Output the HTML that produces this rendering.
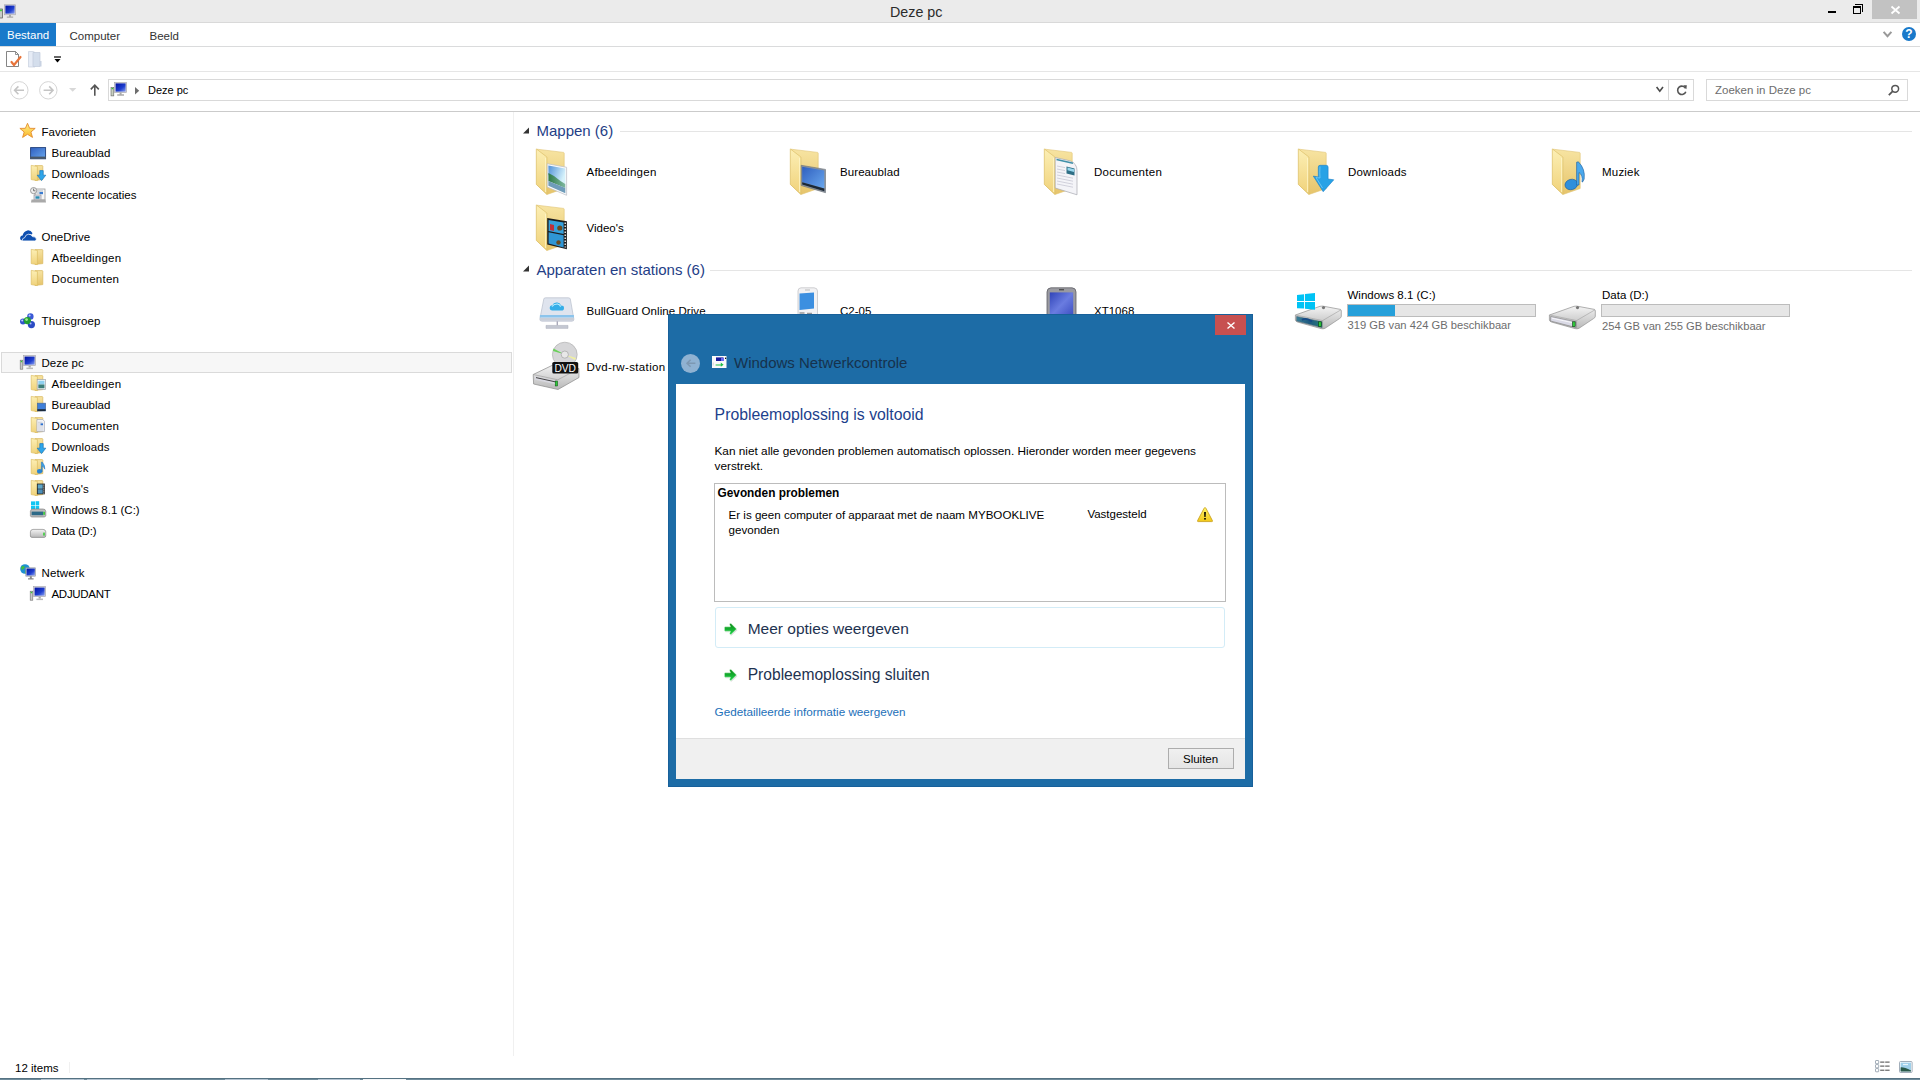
<!DOCTYPE html>
<html><head><meta charset="utf-8">
<style>
*{margin:0;padding:0;box-sizing:border-box}
html,body{width:1920px;height:1080px;overflow:hidden;background:#fff}
body{position:relative;font-family:"Liberation Sans",sans-serif;color:#000;font-size:11.5px}
.a{position:absolute}
.t{position:absolute;white-space:nowrap;line-height:15px;font-size:11.5px}
.ln{position:absolute;background:#dcdcdc}
svg.i{position:absolute;overflow:visible}
</style></head><body>

<svg width="0" height="0" style="position:absolute">
<defs>
<linearGradient id="gFront" x1="0" y1="0" x2="0" y2="1"><stop offset="0" stop-color="#fcefb5"/><stop offset="1" stop-color="#f0d27a"/></linearGradient>
<linearGradient id="gBack" x1="0" y1="0" x2="0" y2="1"><stop offset="0" stop-color="#f7e4a2"/><stop offset="1" stop-color="#e6c46a"/></linearGradient>
<linearGradient id="gStar" x1="0" y1="0" x2="0" y2="1"><stop offset="0" stop-color="#fff08a"/><stop offset="1" stop-color="#f9b82a"/></linearGradient>
<linearGradient id="gScr" x1="0" y1="0" x2="1" y2="1"><stop offset="0" stop-color="#2f5fbf"/><stop offset="1" stop-color="#6aa8ee"/></linearGradient>
<linearGradient id="gMon" x1="0" y1="0" x2="1" y2="1"><stop offset="0" stop-color="#0010a0"/><stop offset="0.6" stop-color="#2040d0"/><stop offset="1" stop-color="#8aa0f0"/></linearGradient>
<linearGradient id="gDrv" x1="0" y1="0" x2="0" y2="1"><stop offset="0" stop-color="#f4f4f4"/><stop offset="1" stop-color="#b8b8b8"/></linearGradient>
<linearGradient id="gGreen" x1="0" y1="0" x2="0" y2="1"><stop offset="0" stop-color="#0a8a16"/><stop offset="1" stop-color="#1fd24a"/></linearGradient>
<linearGradient id="gWarn" x1="0" y1="0" x2="0" y2="1"><stop offset="0" stop-color="#fff46a"/><stop offset="1" stop-color="#f2c818"/></linearGradient>
<linearGradient id="gBtn" x1="0" y1="0" x2="0" y2="1"><stop offset="0" stop-color="#f2f2f2"/><stop offset="1" stop-color="#e2e2e2"/></linearGradient>

<!-- small folder 16 -->
<symbol id="f16" viewBox="0 0 16 16" overflow="visible">
 <path d="M5 0.6L12.4 0.6L12.8 1.2V14.6L5 15.4z" fill="url(#gBack)" stroke="#d8b65c" stroke-width="0.7"/>
 <path d="M1.2 0.4L7.4 1.4V15.6L1.2 14.6z" fill="url(#gFront)" stroke="#dcbd62" stroke-width="0.7"/>
</symbol>
<symbol id="o16pic" viewBox="0 0 16 16" overflow="visible">
 <rect x="7.2" y="4.6" width="8.4" height="9.8" fill="#fafafa" stroke="#a0a4ac" stroke-width="0.7"/>
 <rect x="8.3" y="5.7" width="6.2" height="3.8" fill="#8fd0f0"/><rect x="8.3" y="9.5" width="6.2" height="3.8" fill="#3d7f7a"/>
</symbol>
<symbol id="o16desk" viewBox="0 0 16 16" overflow="visible">
 <rect x="7.4" y="7.2" width="8.2" height="7.8" fill="#3f7fd9" stroke="#4a6a9a" stroke-width="0.7"/>
 <rect x="7.4" y="13.2" width="8.2" height="1.8" fill="#1c2a3a"/>
</symbol>
<symbol id="o16doc" viewBox="0 0 16 16" overflow="visible">
 <path d="M6.9 2.6H12.8L14.4 4.2V14.6H6.9z" fill="#f8f8fa" stroke="#a0a4b0" stroke-width="0.7"/>
 <path d="M8 5.2h4.6M8 7h5.4M8 9h5.4M8 11h5.4M8 13h5.4" stroke="#b0b6c4" stroke-width="0.7"/>
 <rect x="10.6" y="6.4" width="2.4" height="1.8" fill="#2a6fd0"/>
</symbol>
<symbol id="o16dl" viewBox="0 0 16 16" overflow="visible">
 <path d="M9.8 5.6H13.2V10.2H15.8L11.5 15.6L7.2 10.2H9.8z" fill="#2ea6ea" stroke="#1b78c0" stroke-width="0.7"/>
</symbol>
<symbol id="o16mus" viewBox="0 0 16 16" overflow="visible">
 <ellipse cx="9.6" cy="12.3" rx="2.6" ry="2.3" fill="#2a86d6"/>
 <path d="M11.4 3L12.4 3.2Q15.2 6.5 14.8 10.2Q13.8 7.6 12.2 7V12.4H11.4z" fill="#3aa0e6" stroke="#1f6fb8" stroke-width="0.5"/>
</symbol>
<symbol id="o16vid" viewBox="0 0 16 16" overflow="visible">
 <rect x="6.9" y="3.6" width="8" height="10.7" fill="#222"/>
 <rect x="7.7" y="4.4" width="5" height="4.3" fill="#5fa6c8"/><rect x="7.7" y="9.3" width="5" height="4.3" fill="#4d8fb8"/>
 <path d="M13.8 4.6v1M13.8 6.6v1M13.8 8.6v1M13.8 10.6v1M13.8 12.6v1" stroke="#fff" stroke-width="0.9"/>
</symbol>
<!-- star -->
<symbol id="star" viewBox="0 0 16 16" overflow="visible">
 <path d="M7.5 0.3L9.6 5.3L15.2 5.4L10.9 9L12.5 14.4L7.5 11.3L2.6 14.4L4.2 9L-0.1 5.4L5.4 5.3z" fill="url(#gStar)" stroke="#e38b2c" stroke-width="0.9" stroke-linejoin="round"/>
</symbol>
<symbol id="mon16" viewBox="0 0 16 16" overflow="visible">
 <rect x="0.6" y="1.6" width="15" height="11.2" fill="url(#gScr)" stroke="#1f3e7a" stroke-width="0.9"/>
 <rect x="0.2" y="10.6" width="15.8" height="2.2" fill="#4a5866"/>
</symbol>
<symbol id="recent16" viewBox="0 0 16 16" overflow="visible">
 <rect x="5" y="2" width="10" height="11" fill="#f6f6f6" stroke="#9a9a9a" stroke-width="0.8"/>
 <path d="M6.5 4h6.5M6.5 6h6.5" stroke="#9ab" stroke-width="0.8"/><rect x="9.5" y="5" width="3.5" height="2.2" fill="#3a7bd0"/>
 <rect x="4" y="8" width="7" height="5" fill="#dde" stroke="#888" stroke-width="0.6"/><rect x="5.5" y="9.3" width="4" height="2.4" fill="#2a8fb0"/>
 <path d="M1.5 12.5H15.5L16 15.5H1z" fill="#a9a9a9"/>
 <circle cx="3.6" cy="3.6" r="3.1" fill="#eee" stroke="#888" stroke-width="0.8"/><path d="M3.6 1.6V3.8H5.4" stroke="#555" stroke-width="0.8" fill="none"/>
</symbol>
<symbol id="cloud16" viewBox="0 0 16 16" overflow="visible">
 <path d="M0.1 10.6Q-0.1 7.8 2.6 7.4Q3.4 3.4 7.4 2.4Q10.8 2 12.4 5L12 6.4Q9.4 5.6 7.8 7Q5.2 7.6 4.6 9.8Q2.6 10 2.4 12.6Q0.3 12.4 0.1 10.6z" fill="#0f50b0"/>
 <path d="M2.2 12.9Q2 10 4.8 9.6Q5.4 6.4 8.6 6.2Q11.4 6.2 12.4 8.6Q16.3 8.4 16.3 11.2Q16.3 12.9 14.6 12.9z" fill="#0f50b0" stroke="#fff" stroke-width="0.7"/>
</symbol>
<symbol id="home16" viewBox="0 0 16 16" overflow="visible">
 <circle cx="10.4" cy="3.4" r="3.2" fill="#3b5ad6"/><circle cx="3" cy="8.4" r="3" fill="#3354cc"/><circle cx="11.4" cy="11.6" r="3.6" fill="#2c4cc4"/>
 <circle cx="7.4" cy="7.6" r="3.6" fill="#22a032"/><circle cx="6.6" cy="6.6" r="1.4" fill="#9ee890"/>
 <circle cx="9.6" cy="2.4" r="1" fill="#c0d0ff"/><circle cx="2.2" cy="7.4" r="1" fill="#c0d0ff"/><circle cx="10.6" cy="10.6" r="1" fill="#a8b8f8"/>
</symbol>
<symbol id="pc16" viewBox="0 0 16 16" overflow="visible">
 <rect x="0.2" y="5.2" width="2.6" height="9" fill="#c8c8c8" stroke="#707070" stroke-width="0.6"/><rect x="0.8" y="5.8" width="1.4" height="1.4" fill="#3c3"/>
 <rect x="3.6" y="0.6" width="12" height="10" fill="#d9d9e0" stroke="#a0a0a8" stroke-width="0.6"/>
 <rect x="4.6" y="1.6" width="10" height="8" fill="url(#gMon)"/>
 <path d="M8.6 10.6h2.2v2h-2.2z" fill="#aaa"/><path d="M6.4 12.6h6.6v1.5H6.4z" fill="#bbb"/>
</symbol>
<symbol id="drvc16" viewBox="0 0 16 16" overflow="visible">
 <rect x="1" y="0.4" width="4" height="3.6" fill="#10c6f4"/><rect x="5.6" y="0.2" width="3.6" height="3.8" fill="#10c6f4"/>
 <rect x="1" y="4.6" width="4" height="3.4" fill="#10c6f4"/><rect x="5.6" y="4.6" width="3.6" height="3.4" fill="#10c6f4"/>
 <path d="M0.4 10.4Q0.6 8 3 8H13Q15.6 8 15.8 10.4V14.6Q15.6 16 14 16H2Q0.4 16 0.4 14.6z" fill="#bdbdbd" stroke="#777" stroke-width="0.6"/>
 <rect x="1.6" y="10.6" width="11.6" height="3.6" fill="#2e6a88"/><rect x="13.4" y="10.8" width="1.4" height="3" fill="#2c2"/>
</symbol>
<symbol id="drvd16" viewBox="0 0 16 16" overflow="visible">
 <path d="M0.4 10.4Q0.6 8 3 8H13Q15.6 8 15.8 10.4V14.6Q15.6 16 14 16H2Q0.4 16 0.4 14.6z" fill="url(#gDrv)" stroke="#777" stroke-width="0.6" transform="translate(0,-2.6)"/>
 <rect x="13.3" y="8.6" width="1.4" height="3" fill="#2c2"/>
</symbol>
<symbol id="net16" viewBox="0 0 16 16" overflow="visible">
 <circle cx="5" cy="5" r="4.8" fill="#1f8fd0"/><path d="M1.2 3Q3 1 5 3Q4 5 2 6Q1 5 1.2 3zM5.5 6.5Q7.5 6 8.6 8Q7 9.6 5 9.4Q4.6 8 5.5 6.5z" fill="#3fbf3f"/>
 <rect x="5.8" y="3.8" width="9.8" height="8.4" fill="#c0c6d0" stroke="#8a8f98" stroke-width="0.5"/><rect x="6.6" y="4.6" width="8.2" height="6.8" fill="url(#gMon)"/>
 <path d="M9.8 12.2h2v2h-2zM8 14.2h5.6v1.2H8z" fill="#888"/>
</symbol>

<!-- large folder 48 -->
<symbol id="f48" viewBox="0 0 48 48" overflow="visible">
 <path d="M5 1.2L31.6 4.4Q32.2 4.6 32.2 5.4V40.5L15 46.5L5 37z" fill="url(#gBack)" stroke="#e0c370" stroke-width="0.6"/>
 <path d="M4.3 0.9L14.9 9V46.3L4.3 36.4z" fill="url(#gFront)" stroke="#dcc06a" stroke-width="0.7"/>
 <path d="M13.6 10V44" stroke="#fff6cc" stroke-width="0.8"/>
</symbol>
<symbol id="o48pic" viewBox="0 0 48 48" overflow="visible">
 <linearGradient id="gSky" x1="0" y1="0" x2="1" y2="0.4"><stop offset="0" stop-color="#4f90d8"/><stop offset="1" stop-color="#d6f2fb"/></linearGradient>
 <linearGradient id="gHill" x1="0" y1="0" x2="1" y2="0"><stop offset="0" stop-color="#2f7a48"/><stop offset="1" stop-color="#7fb8a0"/></linearGradient>
 <path d="M15.2 15.7L34.6 19.3V47.3L15.2 39z" fill="#fbfbfb" stroke="#b9bcc4" stroke-width="0.7"/>
 <path d="M16.4 17.4L33.3 20.6V36L16.4 27z" fill="url(#gSky)"/>
 <path d="M16.4 25L22 28Q28 33 33.3 36V40L16.4 33z" fill="url(#gHill)"/>
 <path d="M16.4 33L33.3 40V45.2L16.4 37.8z" fill="#6f9cba"/>
</symbol>
<symbol id="o48desk" viewBox="0 0 48 48" overflow="visible">
 <path d="M15.2 17.3L39.5 21.4V44.7L15.2 37.5z" fill="#8a929c" stroke="#6a7078" stroke-width="0.6"/>
 <path d="M16.2 18.7L38.3 22.6V40.6L16.2 34.2z" fill="url(#gScr)"/>
 <path d="M16.2 34.2L38.3 40.6V43.2L16.2 36.6z" fill="#1b2836"/>
</symbol>
<symbol id="o48doc" viewBox="0 0 48 48" overflow="visible">
 <path d="M15.2 9.5L30 12.8Q37 15.5 37 22.5V46.8L15.2 40z" fill="#f4f4f8" stroke="#a6a8b0" stroke-width="0.7"/>
 <path d="M16.5 11.5L33 15.2" stroke="#3f8fa8" stroke-width="1.6"/>
 <path d="M17 18l8 1.6M17 21l8 1.6M17 24l8 1.6M17 27l16 3.2M17 30l16 3.2M17 33l16 3.2M17 36l16 3.2" stroke="#c8c8d4" stroke-width="0.8"/>
 <path d="M26.5 18.5L34.5 20.6V27.5L26.5 25.4z" fill="#2f6f86"/><path d="M27.5 19.5L34 21.2V24L27.5 22.2z" fill="#9ad8ee"/>
</symbol>
<symbol id="o48dl" viewBox="0 0 48 48" overflow="visible">
 <path d="M24.3 19Q24.3 17.3 26.2 17.3H32.2Q34.1 17.3 34.1 19.2V31L39.8 31.8L29.2 43.7L19.3 28.1L24.3 29z" fill="#27a2e6" stroke="#1a7ec8" stroke-width="0.6"/>
 <path d="M26 18.5Q25.5 24 26 30L22 29.5L28.5 40" stroke="#7fd0f8" stroke-width="1" fill="none" opacity="0.7"/>
</symbol>
<symbol id="o48mus" viewBox="0 0 48 48" overflow="visible">
 <ellipse cx="23.3" cy="36.5" rx="6.4" ry="5.2" transform="rotate(-15 23.3 36.5)" fill="#2f8fdc" stroke="#1d5c9a" stroke-width="0.6"/>
 <path d="M28.6 14.2L30.4 13.8Q37.5 21 36.2 31Q34.5 35 34 34Q35 27 31 24.5V37H28.6z" fill="#4aa8ec" stroke="#1d5c9a" stroke-width="0.6"/>
</symbol>
<symbol id="o48vid" viewBox="0 0 48 48" overflow="visible">
 <path d="M15.2 14.1L34.9 17.3V45.2L15.2 40.6z" fill="#1c1c1c"/>
 <path d="M16.6 15.9L31.6 18.6V30L16.6 27z" fill="#35a0dc"/>
 <path d="M16.6 28.2L31.6 31.2V43.4L16.6 39.4z" fill="#2f96d4"/>
 <circle cx="27.8" cy="24" r="2.6" fill="#6a4a20"/><path d="M18 20l4 1v6l-4-1z" fill="#c0303a"/><circle cx="26.5" cy="38.5" r="2.2" fill="#6a4a20"/>
 <path d="M33.2 18.6v1.4M33.2 21.6v1.4M33.2 24.6v1.4M33.2 27.6v1.4M33.2 30.6v1.4M33.2 33.6v1.4M33.2 36.6v1.4M33.2 39.6v1.4M33.2 42.4v1.2" stroke="#fff" stroke-width="1.3"/>
</symbol>
<symbol id="bull48" viewBox="0 0 48 48" overflow="visible">
 <path d="M11.8 15Q12 13.8 13.5 13.8H36.5Q38 13.8 38.3 15L41.9 35.2Q42 37.2 40 37.2H10Q7.8 37.2 7.8 35.2z" fill="#dfe4ee" stroke="#b8bfcc" stroke-width="0.7"/>
 <path d="M7.9 31H41.9V33.6H7.9z" fill="#8cc4ec"/>
 <path d="M8 34h34v2.8H8z" fill="#c9ced8"/>
 <path d="M17.8 24.8Q17.2 21.6 20.4 21.2Q21.6 18 25.5 18.6Q28.5 19 29 21.6Q32 21.6 32 24Q32 26.6 29.4 26.6H20.2Q18 26.6 17.8 24.8z" fill="#35aee8"/>
 <path d="M20 22.5Q22 19.8 25.5 20Q28 20.4 28.6 22.6" stroke="#bff0ff" stroke-width="1.2" fill="none"/>
 <path d="M24.6 37.2h1.4v4.4h-1.4z" fill="#aab"/><path d="M14 41.4H36V44.4H14z" fill="#c4c8d2" stroke="#a8adb8" stroke-width="0.5"/>
</symbol>
<symbol id="dvd48" viewBox="0 0 48 48" overflow="visible">
 <path d="M1.2 35.5L22 25.5L46.8 29.5L47 38.5L26 50.5L1.6 45z" fill="url(#gDrv)" stroke="#8a8a8a" stroke-width="0.7"/>
 <path d="M1.2 35.5L25.8 40.8L47 29.6" stroke="#9a9a9a" stroke-width="0.6" fill="none"/>
 <path d="M3 37.2L24.8 42L24.8 45.5L3 40.8z" fill="#d8d8e0"/><path d="M4 38.6L24 43" stroke="#444" stroke-width="1"/>
 <rect x="23.2" y="42" width="2.4" height="5" fill="#2fc83a" stroke="#0a4a10" stroke-width="0.5"/>
 <circle cx="32.8" cy="15.6" r="12.4" fill="#d6d6d8" stroke="#a8a8a8" stroke-width="0.6"/>
 <path d="M32.8 15.6L21 12L21.5 9.5z" fill="#6ad05a"/><path d="M32.8 15.6L44 19L43 21z" fill="#f0f0a0"/>
 <circle cx="32.8" cy="15.6" r="3.6" fill="#e8e8e8" stroke="#aaa" stroke-width="0.8"/>
 <rect x="20.3" y="23" width="25.9" height="11.5" rx="1.6" fill="#111"/>
 <text x="33.2" y="32.6" font-family="Liberation Sans" font-size="10.2" fill="#fff" text-anchor="middle">DVD</text>
</symbol>
<symbol id="drv48" viewBox="0 0 48 48" overflow="visible">
 <path d="M1.4 32L26 23.3Q28.5 22.8 31 23.5L46.5 26.4Q47.3 27 47.3 28V33.5Q47.1 34.7 45.5 35.6L31 45.3Q29 46.2 27 45.6L3.4 39Q1.6 38.4 1.4 37z" fill="url(#gDrv)" stroke="#8f8f8f" stroke-width="0.7"/>
 <path d="M1.5 32L28.6 37.6L47 26.8" stroke="#9d9d9d" stroke-width="0.6" fill="none"/>
 <path d="M28.6 37.6V45.6" stroke="#a0a0a0" stroke-width="0.6"/>
 <circle cx="29.5" cy="24.6" r="1.6" fill="#777"/>
</symbol>
<symbol id="drvfrontd" viewBox="0 0 48 48" overflow="visible">
 <path d="M2.6 33.4L28 38.8V44.6L2.6 38z" fill="#dadae6" stroke="#7a7a7a" stroke-width="0.6"/>
 <path d="M4 35.2L24 39.6" stroke="#fff" stroke-width="1" opacity="0.8"/>
 <rect x="24.6" y="38.8" width="2.6" height="4.8" fill="#2fcc3a" stroke="#0a3a10" stroke-width="0.6"/>
</symbol>
<symbol id="drvfrontc" viewBox="0 0 48 48" overflow="visible">
 <linearGradient id="gFc" x1="0" y1="0" x2="1" y2="0"><stop offset="0" stop-color="#3a7f98"/><stop offset="0.5" stop-color="#1e5a80"/><stop offset="1" stop-color="#2a7a7a"/></linearGradient>
 <path d="M2.6 33.4L28 38.8V44.6L2.6 38z" fill="url(#gFc)" stroke="#4a6a78" stroke-width="0.6"/>
 <path d="M8 37Q12 34.2 18 38.4" stroke="#174a86" stroke-width="1.8" fill="none"/>
 <rect x="24.6" y="38.8" width="2.6" height="4.8" fill="#2fcc3a" stroke="#0a3a10" stroke-width="0.6"/>
</symbol>
<symbol id="winlogo" viewBox="0 0 48 48" overflow="visible">
 <path d="M3 11.9L10.1 11.2V18H3zM11 11.1L21 10.1V18H11zM3 18.9H10.1V25.6L3 25.2zM11 18.9H21V26.7L11 25.7z" fill="#00c3f5"/>
</symbol>
<symbol id="warn" viewBox="0 0 16 16" overflow="visible">
 <path d="M8 0.6Q8.6 0.6 9 1.4L15.4 13.6Q15.8 14.6 14.8 14.6H1.2Q0.2 14.6 0.6 13.6L7 1.4Q7.4 0.6 8 0.6z" fill="url(#gWarn)" stroke="#c59a14" stroke-width="0.8"/>
 <path d="M7.1 5.1H8.9L8.6 10H7.4z" fill="#000"/><rect x="7.2" y="11" width="1.6" height="1.6" fill="#000"/>
</symbol>
<symbol id="garrow" viewBox="0 0 16 16" overflow="visible">
 <path d="M1.8 7.2H7L6.2 4.8Q6.4 3.4 7.6 3.8L13.4 9.2L7.6 14.6Q6.4 15 6.2 13.6L7 11.2H1.8Q1 11.2 1 10.4V8Q1 7.2 1.8 7.2z" fill="#000" opacity="0.13"/>
 <path d="M1.2 5.8H6.4L5.6 3.4Q5.8 2 7 2.4L12.6 8L7 13.6Q5.8 14 5.6 12.6L6.4 10.2H1.2Q0.4 10.2 0.4 9.4V6.6Q0.4 5.8 1.2 5.8z" fill="url(#gGreen)" stroke="#e6ffe6" stroke-width="0.5" stroke-linejoin="round"/>
</symbol>
</defs></svg>

<!-- ===== TITLE BAR ===== -->
<div class="a" style="left:0;top:0;width:1920px;height:22px;background:#ebebeb"></div>
<div class="ln" style="left:0;top:22px;width:1920px;height:1px;background:#d9d9d9"></div>
<div class="t" style="left:890px;top:2px;font-size:14.3px;line-height:20px;color:#2b2b2b">Deze pc</div>
<div class="a" style="left:1828px;top:11px;width:8px;height:2px;background:#000"></div>
<div class="a" style="left:1853px;top:6px;width:8px;height:8px;border:1px solid #000;border-top-width:2px"></div>
<div class="a" style="left:1855px;top:4px;width:8px;height:8px;border-top:1px solid #000;border-right:1px solid #000"></div>
<div class="a" style="left:1872px;top:0;width:45px;height:19px;background:#c2c2c2"></div>
<svg class="i" style="left:1891px;top:6px" width="9" height="8"><path d="M0.5 0.5L8.5 7.5M8.5 0.5L0.5 7.5" stroke="#fff" stroke-width="1.8"/></svg>


<svg class="i" style="left:0;top:4px" width="16" height="15"><rect x="-0.5" y="5" width="3" height="9" fill="#c8ccc8" stroke="#555" stroke-width="0.7"/><rect x="0" y="5.6" width="2" height="1.6" fill="#4c4"/><rect x="4.5" y="0.8" width="11" height="10" fill="#d8d8e0" stroke="#a0a0a8" stroke-width="0.6"/><rect x="5.4" y="1.6" width="9.2" height="8" fill="url(#gMon)"/><path d="M9 10.8h2v1.6H9zM6.8 12.4h6.4v1.3H6.8z" fill="#aaa"/></svg>
<svg class="i" style="left:6px;top:51px" width="16" height="17"><path d="M0.5 0.5H9.5L12.5 3.5V15.5H0.5z" fill="#fff" stroke="#777" stroke-width="0.9"/><path d="M9.5 0.5V3.5H12.5" fill="none" stroke="#777" stroke-width="0.8"/><path d="M5.5 11L8 14L14.5 6" stroke="#e8743a" stroke-width="2.2" fill="none" stroke-linecap="round"/></svg>
<svg class="i" style="left:28px;top:51px" width="14" height="17"><path d="M0.5 0.5H5L7 1.5V16H0.5z" fill="#e6ecf6" stroke="#c7d0de" stroke-width="0.7"/><path d="M5 1.5H12V15.5H5z" fill="#d4deec" stroke="#c0cadb" stroke-width="0.7"/><path d="M12 10H13.5V15.5H12z" fill="#c8d2e2"/></svg>
<svg class="i" style="left:54px;top:56px" width="8" height="8"><path d="M0 1h7" stroke="#000" stroke-width="1.2"/><path d="M0.5 3H6.5L3.5 6.6z" fill="#000"/></svg>
<svg class="i" style="left:10px;top:80.5px" width="19" height="19"><circle cx="9.3" cy="9.3" r="8.7" fill="none" stroke="#d6d6d6" stroke-width="1"/><path d="M4.6 9.3H14M8.4 5.4L4.6 9.3L8.4 13.2" fill="none" stroke="#c4c4c4" stroke-width="1.6"/></svg>
<svg class="i" style="left:39px;top:80.5px" width="19" height="19"><circle cx="9.3" cy="9.3" r="8.7" fill="none" stroke="#d6d6d6" stroke-width="1"/><path d="M4.6 9.3H14M10.2 5.4L14 9.3L10.2 13.2" fill="none" stroke="#c4c4c4" stroke-width="1.6"/></svg>
<svg class="i" style="left:69px;top:88px" width="8" height="4"><path d="M0 0H7.4L3.7 3.8z" fill="#d8d8d8"/></svg>
<svg class="i" style="left:90px;top:84px" width="10" height="12"><path d="M4.8 1.4V11.8M0.8 5.4L4.8 1.2L8.8 5.4" fill="none" stroke="#555" stroke-width="1.6"/></svg>
<svg class="i" style="left:111px;top:81.5px" width="16" height="15"><rect x="0" y="5.5" width="2.8" height="8.4" fill="#c8d0c0" stroke="#666" stroke-width="0.6"/><rect x="0.6" y="6" width="1.6" height="1.2" fill="#3c3"/><rect x="3.6" y="0.5" width="12" height="10" fill="#d8d8e0" stroke="#a0a0a8" stroke-width="0.6"/><rect x="4.6" y="1.4" width="10" height="8.2" fill="url(#gMon)"/><path d="M8.6 10.5h2v1.8h-2zM6.2 12.3h6.8v1.5H6.2z" fill="#aaa"/></svg>
<svg class="i" style="left:135px;top:86.5px" width="5" height="8"><path d="M0 0L4.2 3.7L0 7.4z" fill="#6d6d6d"/></svg>
<svg class="i" style="left:1656px;top:86px" width="8" height="7"><path d="M0.6 1L3.8 5.2L7 1" fill="none" stroke="#4a4a4a" stroke-width="1.6"/></svg>
<svg class="i" style="left:1675.5px;top:84px" width="12" height="12"><path d="M9.6 4.4A4.2 4.2 0 1 0 9.8 7.8" fill="none" stroke="#555" stroke-width="1.6"/><path d="M7.2 1.2L10.8 1.2L10.4 5.2z" fill="#555"/></svg>
<svg class="i" style="left:1888px;top:84px" width="12" height="12"><circle cx="7.2" cy="4.8" r="3.4" fill="none" stroke="#555" stroke-width="1.5"/><path d="M4.8 7.2L0.8 11.2" stroke="#555" stroke-width="1.8"/></svg>

<!-- ===== RIBBON TABS ===== -->
<div class="a" style="left:0;top:23px;width:56px;height:23px;background:#1979ca"></div>
<div class="t" style="left:7px;top:28px;color:#fff">Bestand</div>
<div class="t" style="left:69.5px;top:28.5px;color:#333">Computer</div>
<div class="t" style="left:149.5px;top:28.5px;color:#333">Beeld</div>
<div class="ln" style="left:0;top:46px;width:1920px;height:1px;background:#dadbdc"></div>
<svg class="i" style="left:1883px;top:31px" width="9" height="7"><path d="M0.6 0.8L4.5 5.2L8.4 0.8" fill="none" stroke="#999" stroke-width="2"/></svg>
<div class="a" style="left:1902px;top:27px;width:14px;height:14px;border-radius:50%;background:#1979ca;color:#fff;font-weight:bold;font-size:12px;line-height:14px;text-align:center">?</div>

<!-- ===== QAT ===== -->
<div class="ln" style="left:0;top:71px;width:1920px;height:1px;background:#e6e6e6"></div>

<!-- ===== ADDRESS ROW ===== -->
<div class="a" style="left:108px;top:79px;width:1586px;height:22px;border:1px solid #d9d9d9"></div>
<div class="ln" style="left:1668px;top:80px;width:1px;height:20px;background:#d9d9d9"></div>
<div class="t" style="left:148px;top:82.5px;color:#000;font-size:11px">Deze pc</div>
<div class="a" style="left:1706px;top:79px;width:202px;height:22px;border:1px solid #d9d9d9"></div>
<div class="t" style="left:1715px;top:82.5px;color:#6d6d6d">Zoeken in Deze pc</div>
<div class="ln" style="left:0;top:111px;width:1920px;height:1px;background:#cbcbcb"></div>

<!-- ===== NAV PANE ===== -->
<div class="ln" style="left:513px;top:112px;width:1px;height:944px;background:#f0f0f0"></div>
<div class="a" style="left:1px;top:352px;width:511px;height:21px;background:#f7f7f7;border:1px solid #dadada"></div>
<div class="t" style="left:41.5px;top:124.5px">Favorieten</div>
<div class="t" style="left:51.5px;top:145.5px">Bureaublad</div>
<div class="t" style="left:51.5px;top:166.5px;letter-spacing:0.15px">Downloads</div>
<div class="t" style="left:51.5px;top:187.5px">Recente locaties</div>
<div class="t" style="left:41.5px;top:229.5px">OneDrive</div>
<div class="t" style="left:51.5px;top:250.5px;letter-spacing:0.22px">Afbeeldingen</div>
<div class="t" style="left:51.5px;top:271.5px;letter-spacing:0.25px">Documenten</div>
<div class="t" style="left:41.5px;top:313.5px;letter-spacing:0.16px">Thuisgroep</div>
<div class="t" style="left:41.5px;top:355.5px">Deze pc</div>
<div class="t" style="left:51.5px;top:376.5px;letter-spacing:0.22px">Afbeeldingen</div>
<div class="t" style="left:51.5px;top:397.5px">Bureaublad</div>
<div class="t" style="left:51.5px;top:418.5px;letter-spacing:0.25px">Documenten</div>
<div class="t" style="left:51.5px;top:439.5px;letter-spacing:0.15px">Downloads</div>
<div class="t" style="left:51.5px;top:460.5px;letter-spacing:0.13px">Muziek</div>
<div class="t" style="left:51.5px;top:481.5px">Video's</div>
<div class="t" style="left:51.5px;top:502.5px">Windows 8.1 (C:)</div>
<div class="t" style="left:51.5px;top:523.5px;letter-spacing:-0.2px">Data (D:)</div>
<div class="t" style="left:41.5px;top:565.5px;letter-spacing:0.15px">Netwerk</div>
<div class="t" style="left:51.5px;top:586.5px;letter-spacing:-0.3px">ADJUDANT</div>

<svg class="i" style="left:20px;top:123px" width="16" height="16"><use href="#star"/></svg>
<svg class="i" style="left:30px;top:145.5px" width="16" height="16"><use href="#mon16"/></svg>
<svg class="i" style="left:30px;top:165px" width="16" height="16"><use href="#f16"/></svg><svg class="i" style="left:30px;top:165px" width="16" height="16"><use href="#o16dl"/></svg>
<svg class="i" style="left:30px;top:186.5px" width="16" height="16"><use href="#recent16"/></svg>
<svg class="i" style="left:20px;top:228px" width="16" height="16"><use href="#cloud16"/></svg>
<svg class="i" style="left:30px;top:249px" width="16" height="16"><use href="#f16"/></svg>
<svg class="i" style="left:30px;top:270px" width="16" height="16"><use href="#f16"/></svg>
<svg class="i" style="left:20px;top:313px" width="16" height="16"><use href="#home16"/></svg>
<svg class="i" style="left:20px;top:354.7px" width="16" height="16"><use href="#pc16"/></svg>
<svg class="i" style="left:30px;top:375px" width="16" height="16"><use href="#f16"/></svg><svg class="i" style="left:30px;top:375px" width="16" height="16"><use href="#o16pic"/></svg>
<svg class="i" style="left:30px;top:396px" width="16" height="16"><use href="#f16"/></svg><svg class="i" style="left:30px;top:396px" width="16" height="16"><use href="#o16desk"/></svg>
<svg class="i" style="left:30px;top:417px" width="16" height="16"><use href="#f16"/></svg><svg class="i" style="left:30px;top:417px" width="16" height="16"><use href="#o16doc"/></svg>
<svg class="i" style="left:30px;top:438px" width="16" height="16"><use href="#f16"/></svg><svg class="i" style="left:30px;top:438px" width="16" height="16"><use href="#o16dl"/></svg>
<svg class="i" style="left:30px;top:459px" width="16" height="16"><use href="#f16"/></svg><svg class="i" style="left:30px;top:459px" width="16" height="16"><use href="#o16mus"/></svg>
<svg class="i" style="left:30px;top:480px" width="16" height="16"><use href="#f16"/></svg><svg class="i" style="left:30px;top:480px" width="16" height="16"><use href="#o16vid"/></svg>
<svg class="i" style="left:30px;top:501px" width="16" height="16"><use href="#drvc16"/></svg>
<svg class="i" style="left:30px;top:523.6px" width="16" height="16"><use href="#drvd16"/></svg>
<svg class="i" style="left:20px;top:564px" width="16" height="16"><use href="#net16"/></svg>
<svg class="i" style="left:30px;top:585.6px" width="16" height="16"><use href="#pc16"/></svg>
<!-- ===== CONTENT ===== -->
<svg class="i" style="left:532px;top:148px" width="48" height="48"><use href="#f48"/></svg><svg class="i" style="left:532px;top:148px" width="48" height="48"><use href="#o48pic"/></svg>
<svg class="i" style="left:786px;top:148px" width="48" height="48"><use href="#f48"/></svg><svg class="i" style="left:786px;top:148px" width="48" height="48"><use href="#o48desk"/></svg>
<svg class="i" style="left:1040px;top:148px" width="48" height="48"><use href="#f48"/></svg><svg class="i" style="left:1040px;top:148px" width="48" height="48"><use href="#o48doc"/></svg>
<svg class="i" style="left:1294px;top:148px" width="48" height="48"><use href="#f48"/></svg><svg class="i" style="left:1294px;top:148px" width="48" height="48"><use href="#o48dl"/></svg>
<svg class="i" style="left:1548px;top:148px" width="48" height="48"><use href="#f48"/></svg><svg class="i" style="left:1548px;top:148px" width="48" height="48"><use href="#o48mus"/></svg>
<svg class="i" style="left:532px;top:204px" width="48" height="48"><use href="#f48"/></svg><svg class="i" style="left:532px;top:204px" width="48" height="48"><use href="#o48vid"/></svg>
<svg class="i" style="left:532px;top:284.2px" width="48" height="48"><use href="#bull48"/></svg>
<svg class="i" style="left:532px;top:339px" width="48" height="48"><use href="#dvd48"/></svg>
<svg class="i" style="left:1294px;top:283px" width="48" height="48"><use href="#drv48"/></svg><svg class="i" style="left:1294px;top:283px" width="48" height="48"><use href="#drvfrontc"/></svg><svg class="i" style="left:1294px;top:283px" width="48" height="48"><use href="#winlogo"/></svg>
<svg class="i" style="left:1548px;top:283px" width="48" height="48"><use href="#drv48"/></svg><svg class="i" style="left:1548px;top:283px" width="48" height="48"><use href="#drvfrontd"/></svg>
<svg class="i" style="left:797px;top:287px" width="22" height="30"><path d="M1 4Q1 1 4 0.8H17Q20.5 1 20.5 4V30H1z" fill="#f2f2f4" stroke="#c4c4c8" stroke-width="0.8"/><path d="M2.5 6.5L17 5.5V21.5L2.5 23z" fill="#3c8fe0"/><path d="M8 3h5" stroke="#bbb" stroke-width="1"/><path d="M2.5 26h5M10 26.5h5" stroke="#999" stroke-width="1.5"/></svg>
<svg class="i" style="left:1046px;top:286.5px" width="31" height="30"><linearGradient id="gPh" x1="0" y1="0" x2="1" y2="1"><stop offset="0" stop-color="#3044b8"/><stop offset="0.5" stop-color="#6a7ce0"/><stop offset="1" stop-color="#3a4cc0"/></linearGradient><path d="M1 5Q1 1 5 0.8H26Q30 1 30 5V30H1z" fill="#9a9aa0" stroke="#5e5e64" stroke-width="0.8"/><path d="M3.8 5.4H27.2V30H3.8z" fill="url(#gPh)"/><path d="M13 2.8h5" stroke="#333" stroke-width="1"/></svg>

<svg class="i" style="left:523px;top:127px" width="7" height="7"><path d="M6 0.5V6.5H0z" fill="#333"/></svg>
<div class="t" style="left:536.5px;top:120.5px;font-size:15px;line-height:20px;color:#243e86">Mappen (6)</div>
<div class="ln" style="left:620px;top:131px;width:1292px;height:1px;background:#e5e5e5"></div>
<div class="t" style="left:586.5px;top:164.5px;letter-spacing:0.24px">Afbeeldingen</div>
<div class="t" style="left:840px;top:164.5px;letter-spacing:0.08px">Bureaublad</div>
<div class="t" style="left:1094px;top:164.5px;letter-spacing:0.3px">Documenten</div>
<div class="t" style="left:1348px;top:164.5px;letter-spacing:0.2px">Downloads</div>
<div class="t" style="left:1602px;top:164.5px;letter-spacing:0.2px">Muziek</div>
<div class="t" style="left:586.5px;top:220.5px">Video's</div>

<svg class="i" style="left:523px;top:265.4px" width="7" height="7"><path d="M6 0.5V6.5H0z" fill="#333"/></svg>
<div class="t" style="left:536.5px;top:259.5px;font-size:15px;line-height:20px;color:#243e86">Apparaten en stations (6)</div>
<div class="ln" style="left:710px;top:270px;width:1202px;height:1px;background:#e5e5e5"></div>
<div class="t" style="left:586.5px;top:303.5px;letter-spacing:0.07px">BullGuard Online Drive</div>
<div class="t" style="left:840px;top:303.5px">C2-05</div>
<div class="t" style="left:1094px;top:303.5px">XT1068</div>
<div class="t" style="left:1347.5px;top:287.5px">Windows 8.1 (C:)</div>
<div class="a" style="left:1347px;top:304px;width:189px;height:13px;background:#e6e6e6;border:1px solid #bcbcbc"></div>
<div class="a" style="left:1348px;top:305px;width:47px;height:11px;background:#26a0da"></div>
<div class="t" style="left:1347.5px;top:318px;color:#6d6d6d;font-size:11.2px">319 GB van 424 GB beschikbaar</div>
<div class="t" style="left:1602px;top:287.5px">Data (D:)</div>
<div class="a" style="left:1601px;top:304px;width:189px;height:13px;background:#e6e6e6;border:1px solid #bcbcbc"></div>
<div class="t" style="left:1602px;top:318.5px;color:#6d6d6d;font-size:11.2px">254 GB van 255 GB beschikbaar</div>
<div class="t" style="left:586.5px;top:359.5px;letter-spacing:0.35px">Dvd-rw-station</div>

<!-- ===== STATUS ===== -->
<div class="t" style="left:15px;top:1060.5px">12 items</div>
<div class="ln" style="left:69px;top:1062px;width:1px;height:11px;background:#f0f0f0"></div>

<svg class="i" style="left:1875px;top:1060px" width="16" height="14"><g fill="#fff" stroke="#7b8a9a" stroke-width="0.7"><rect x="0.5" y="0.5" width="3.2" height="3.2" rx="0.6"/><rect x="0.5" y="4.6" width="3.2" height="3.2" rx="0.6"/><rect x="0.5" y="8.6" width="3.2" height="3.2" rx="0.6"/></g><path d="M5.2 2.1h4.2M10.2 2.1h4.4M5.2 6.1h4.2M10.2 6.1h4.4M5.2 10.2h4.2M10.2 10.2h4.4" stroke="#444" stroke-width="1"/></svg>
<svg class="i" style="left:1898.5px;top:1061px" width="14" height="13"><rect x="0.5" y="0.5" width="12.6" height="11" rx="1" fill="#fff" stroke="#8a99a8" stroke-width="0.8"/><rect x="1.6" y="1.6" width="10.4" height="8.8" fill="#9fd0ea"/><path d="M4 3.5h5" stroke="#e8f6fc" stroke-width="1.2"/><path d="M1.6 6.4Q5 6 12 9.6V10.4H1.6z" fill="#2a5a4a"/></svg>
<div class="a" style="left:0;top:1078px;width:1920px;height:2px;background:#6f8c9c;border-top:1px solid #557282"></div>
<div class="a" style="left:41px;top:1079px;width:43px;height:1px;background:#b4c4d2"></div>
<div class="a" style="left:87px;top:1079px;width:43px;height:1px;background:#b4c4d2"></div>
<div class="a" style="left:225px;top:1079px;width:43px;height:1px;background:#b4c4d2"></div>
<div class="a" style="left:318px;top:1079px;width:42px;height:1px;background:#b4c4d2"></div>
<div class="a" style="left:363px;top:1079px;width:43px;height:1px;background:#f4f6f8"></div>

<!-- ===== DIALOG ===== -->
<div class="a" style="left:668px;top:314px;width:585px;height:473px;background:#1d6ca6;border:1px solid #18609a"></div>
<div class="a" style="left:676px;top:384px;width:569px;height:395px;background:#fff"></div>
<div class="a" style="left:1215px;top:315px;width:31px;height:20px;background:#c75050"></div>
<svg class="i" style="left:1227px;top:322px" width="8" height="7"><path d="M0.5 0.5L7.5 6.5M7.5 0.5L0.5 6.5" stroke="#fff" stroke-width="1.4"/></svg>
<div class="a" style="left:680.5px;top:353.5px;width:19px;height:19px;border-radius:50%;background:#8fb2d2"></div>
<div class="t" style="left:734px;top:352.5px;font-size:15px;line-height:20px;color:#16324d">Windows Netwerkcontrole</div>
<div class="t" style="left:714.6px;top:404.5px;font-size:15.8px;line-height:20px;color:#1d3f8c">Probleemoplossing is voltooid</div>
<div class="t" style="left:714.5px;top:443.6px;font-size:11.8px">Kan niet alle gevonden problemen automatisch oplossen. Hieronder worden meer gegevens</div>
<div class="t" style="left:714.5px;top:459px;font-size:11.8px">verstrekt.</div>
<div class="a" style="left:714px;top:483px;width:512px;height:119px;border:1px solid #bcbcbc"></div>
<div class="t" style="left:717.5px;top:486px;font-weight:bold;font-size:11.85px">Gevonden problemen</div>
<div class="t" style="left:728.5px;top:507px;font-size:11.6px">Er is geen computer of apparaat met de naam MYBOOKLIVE</div>
<div class="t" style="left:728.5px;top:522px;font-size:11.6px">gevonden</div>
<div class="t" style="left:1087.4px;top:507px">Vastgesteld</div>
<div class="a" style="left:715px;top:607px;width:510px;height:41px;border:1px solid #d3ecf7;border-radius:3px"></div>
<div class="t" style="left:747.7px;top:618.5px;font-size:15.5px;line-height:20px;color:#1e3250">Meer opties weergeven</div>
<div class="t" style="left:747.7px;top:664.5px;font-size:15.6px;line-height:20px;color:#1e3250">Probleemoplossing sluiten</div>
<div class="t" style="left:714.6px;top:703.5px;font-size:11.7px;color:#1c6fb9">Gedetailleerde informatie weergeven</div>
<div class="a" style="left:676px;top:738px;width:569px;height:41px;background:#f0f0f0;border-top:1px solid #dfdfdf"></div>
<div class="a" style="left:1168px;top:748px;width:66px;height:21px;border:1px solid #adadad;background:linear-gradient(#f0f0f0,#e5e5e5)"></div>
<div class="t" style="left:1183px;top:751.5px">Sluiten</div>

<svg class="i" style="left:686px;top:359px" width="10" height="9"><path d="M1 4.3H9.4M4.6 0.8L1 4.3L4.6 7.8" fill="none" stroke="#7d98b2" stroke-width="1.5"/></svg>
<svg class="i" style="left:712px;top:355.5px" width="15" height="12"><rect x="0" y="0" width="14.5" height="12" fill="#fafafa"/><rect x="4" y="1.4" width="7.5" height="3.6" fill="#1a1a9a"/><rect x="9" y="2" width="3" height="3" fill="#6a6af0"/><rect x="13" y="1.6" width="1.2" height="1.4" fill="#111"/><path d="M3.6 8.5H8.8V6.6L11.6 8.7L8.8 10.8V9.4H3.6z" fill="#1fbf48"/><path d="M1.2 6.5v3" stroke="#ccc" stroke-width="0.8"/></svg>
<svg class="i" style="left:1197.4px;top:506.5px" width="16" height="16"><use href="#warn"/></svg><svg class="i" style="left:724px;top:620.5px" width="16" height="16"><use href="#garrow"/></svg><svg class="i" style="left:724px;top:666.5px" width="16" height="16"><use href="#garrow"/></svg>

</body></html>
